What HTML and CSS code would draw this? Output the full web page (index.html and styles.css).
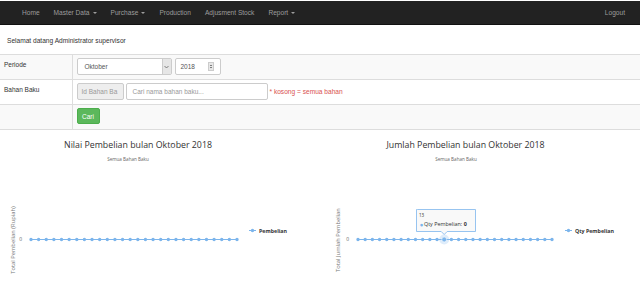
FILE: index.html
```html
<!DOCTYPE html>
<html>
<head>
<meta charset="utf-8">
<link rel="stylesheet" href="styles.css">
</head>
<body>
<nav class="navbar">
  <ul class="nav-left">
    <li>Home</li>
    <li>Master Data <span class="caret"></span></li>
    <li>Purchase <span class="caret"></span></li>
    <li>Production</li>
    <li>Adjusment Stock</li>
    <li>Report <span class="caret"></span></li>
  </ul>
  <ul class="nav-right">
    <li>Logout</li>
  </ul>
</nav>

<p class="welcome">Selamat datang Administrator supervisor</p>

<table class="filter">
  <tr class="odd">
    <th>Periode</th>
    <td>
      <div class="row">
        <div class="select"><span class="val">Oktober</span><span class="arrow"><svg width="5" height="4" viewBox="0 0 5 4"><path d="M0.5 1 L2.5 3 L4.5 1" fill="none" stroke="#666" stroke-width="0.8"/></svg></span></div>
        <div class="number"><span class="val">2018</span><span class="spin"><svg width="5" height="7" viewBox="0 0 5 7"><path d="M1 3 L2.5 1.3 L4 3 Z M1 4 L2.5 5.7 L4 4 Z" fill="#555"/></svg></span></div>
      </div>
    </td>
  </tr>
  <tr>
    <th>Bahan Baku</th>
    <td>
      <div class="row tight">
        <div class="input disabled">Id Bahan Ba</div>
        <div class="input wide">Cari nama bahan baku...</div>
        <span class="hint">* kosong = semua bahan</span>
      </div>
    </td>
  </tr>
  <tr class="odd">
    <th></th>
    <td><button class="btn">Cari</button></td>
  </tr>
</table>

<div class="charts">
  <svg class="chart" width="320" height="164" viewBox="0 1 320 164">
    <text class="title" x="138" y="19" text-anchor="middle">Nilai Pembelian bulan Oktober 2018</text>
    <text class="subtitle" x="128" y="32" text-anchor="middle">Semua Bahan Baku</text>
    <text class="axis-title" transform="translate(15 111) rotate(-90)" text-anchor="middle">Total Pembelian (Rupiah)</text>
    <text class="axis-label" x="22" y="112" text-anchor="end">0</text>
    <line x1="31" y1="110.5" x2="237" y2="110.5" stroke="#7cb5ec" stroke-width="1"/>
    <line x1="31" y1="110.5" x2="237.5" y2="110.5" stroke="#7cb5ec" stroke-width="3.4" stroke-linecap="round" stroke-dasharray="0 7.6296"/>
    <line x1="249" y1="101.5" x2="256" y2="101.5" stroke="#7cb5ec" stroke-width="1"/>
    <circle cx="252.5" cy="101.5" r="1.7" fill="#7cb5ec"/>
    <text class="legend" x="259" y="103.5">Pembelian</text>
  </svg>
  <svg class="chart" width="320" height="164" viewBox="0 1 320 164">
    <text class="title" x="145.5" y="19" text-anchor="middle">Jumlah Pembelian bulan Oktober 2018</text>
    <text class="subtitle" x="136" y="32" text-anchor="middle">Semua Bahan Baku</text>
    <text class="axis-title" transform="translate(20 111) rotate(-90)" text-anchor="middle">Total Jumlah Pembelian</text>
    <text class="axis-label" x="29" y="112" text-anchor="end">0</text>
    <line x1="38" y1="110.5" x2="232" y2="110.5" stroke="#7cb5ec" stroke-width="1"/>
    <line x1="38" y1="110.5" x2="232.5" y2="110.5" stroke="#7cb5ec" stroke-width="3.4" stroke-linecap="round" stroke-dasharray="0 7.1852"/>
    <circle cx="124.2" cy="110.5" r="5" fill="#7cb5ec" opacity="0.25"/>
    <circle cx="124.2" cy="110.5" r="2.4" fill="#7cb5ec" stroke="#fff" stroke-width="0.5"/>
    <path d="M97.5 80.5 H155.5 V102.5 H127.2 L124.2 105.5 L121.2 102.5 H96.5 V80.5 Z" fill="rgba(249,249,249,0.92)" stroke="#7cb5ec" stroke-width="0.8"/>
    <text class="tt-head" x="99" y="88">13</text>
    <text class="tt-dot" x="100" y="96.5">●</text>
    <text class="tt-body" x="104" y="96.8">Qty Pembelian: <tspan class="tt-val">0</tspan></text>
    <line x1="245" y1="101.5" x2="252" y2="101.5" stroke="#7cb5ec" stroke-width="1"/>
    <circle cx="248.5" cy="101.5" r="1.7" fill="#7cb5ec"/>
    <text class="legend" x="255" y="103.5">Qty Pembelian</text>
  </svg>
</div>
</body>
</html>
```

FILE: styles.css
```css
* { box-sizing: border-box; }
html, body {
  margin: 0;
  padding: 0;
  background: #fff;
  font-family: "Liberation Sans", Arial, sans-serif;
  font-size: 6.5px;
  color: #333;
}
.navbar {
  margin-top: 1px;
  height: 24px;
  background: #222;
  border-bottom: 1px solid #111;
  display: flex;
  justify-content: space-between;
  align-items: center;
  padding: 0 8px 0 15px;
}
.navbar ul {
  list-style: none;
  margin: 0;
  padding: 0;
  display: flex;
}
.navbar li {
  color: #9d9d9d;
  padding: 0 7px;
  line-height: 23px;
  font-size: 6.6px;
  display: flex;
  align-items: center;
}
.caret {
  display: inline-block;
  width: 0;
  height: 0;
  margin-left: 3px;
  border-top: 2px solid #9d9d9d;
  border-left: 2px solid transparent;
  border-right: 2px solid transparent;
}
.welcome {
  margin: 0;
  padding: 11px 7px 9px;
  line-height: 9px;
  font-size: 6.6px;
}
.filter {
  width: 100%;
  border-collapse: collapse;
  border-top: 1px solid #ddd;
  border-bottom: 1px solid #ddd;
}
.filter tr { height: 25px; }
.filter tr.odd { background: #f9f9f9; }
.filter th, .filter td {
  border-top: 1px solid #ddd;
  padding: 3px 4px 4px;
  vertical-align: top;
  text-align: left;
  font-weight: normal;
  line-height: 9px;
}
.filter th {
  width: 72px;
  border-right: 1px solid #ddd;
  padding-top: 5px;
}
.row {
  display: flex;
  align-items: center;
  gap: 3px;
}
.row.tight { gap: 2px; }
.select, .number, .input {
  height: 17px;
  border: 1px solid #ccc;
  border-radius: 2px;
  background: #fff;
  display: flex;
  align-items: center;
  color: #555;
  font-size: 6.5px;
}
.select {
  width: 95px;
  padding-left: 7px;
  justify-content: space-between;
}
.select .arrow {
  width: 9px;
  height: 15px;
  background: #e6e6e6;
  border-left: 1px solid #ccc;
  display: flex;
  align-items: center;
  justify-content: center;
}
.number {
  width: 46px;
  padding: 0 6px 0 5px;
  justify-content: space-between;
}
.number .spin {
  width: 6px;
  height: 9px;
  background: #e8e8e8;
  border: 1px solid #ccc;
  display: flex;
  align-items: center;
  justify-content: center;
}
.input {
  padding-left: 4px;
  color: #999;
  white-space: nowrap;
  overflow: hidden;
}
.input.disabled {
  width: 47px;
  background: #eee;
}
.input.wide {
  width: 142px;
  padding-left: 6px;
}
.hint {
  color: #d9534f;
  font-size: 6.6px;
}
.btn {
  width: 23px;
  height: 16px;
  border: 1px solid #4cae4c;
  border-radius: 2px;
  background: #5cb85c;
  color: #fff;
  font-family: "Liberation Sans", Arial, sans-serif;
  font-size: 6.5px;
  padding: 0;
}
.charts {
  display: flex;
}
.chart {
  display: block;
  flex: 0 0 320px;
  font-family: "Open Sans", "DejaVu Sans", sans-serif;
}
.title {
  font-size: 8.8px;
  fill: #333;
}
.subtitle {
  font-size: 4.6px;
  fill: #666;
}
.axis-title {
  font-size: 5.8px;
  fill: #777;
}
.axis-label {
  font-size: 5px;
  fill: #666;
}
.legend {
  font-size: 5.3px;
  font-weight: bold;
  fill: #333;
}
.tt-head {
  font-size: 4.5px;
  fill: #333;
}
.tt-dot {
  font-size: 3.5px;
  fill: #7cb5ec;
}
.tt-body {
  font-size: 5.4px;
  fill: #333;
}
.tt-val {
  font-weight: bold;
}
```
